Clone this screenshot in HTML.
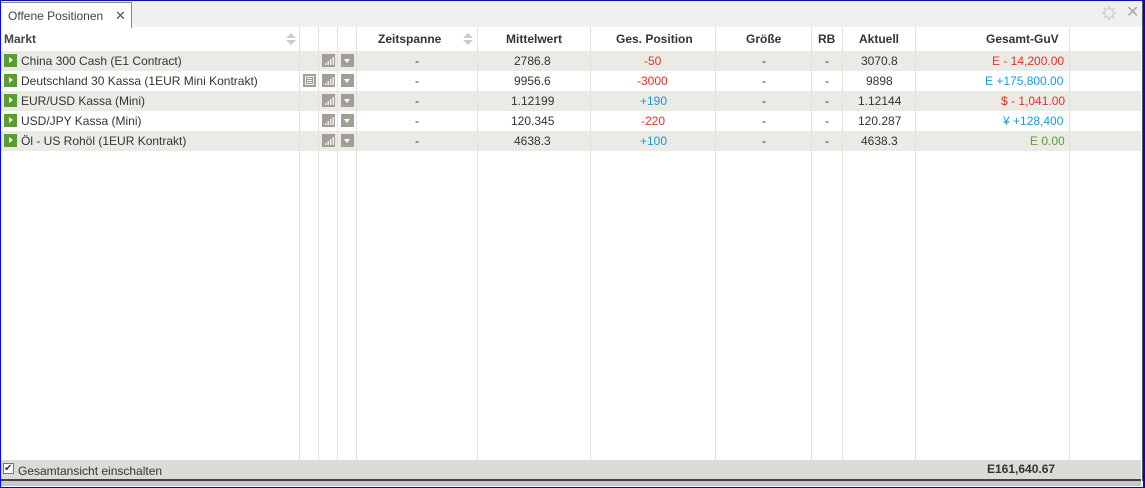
<!DOCTYPE html>
<html><head><meta charset="utf-8"><style>
*{box-sizing:border-box;margin:0;padding:0}
body{width:1145px;height:488px;background:#fff;font-family:"Liberation Sans",sans-serif;font-size:12px;color:#333;position:relative;overflow:hidden}
.frame{position:absolute;left:0;top:0;width:1145px;height:488px;border:1px solid #00f;border-right:2px solid #00f;}
.topbar{position:absolute;left:1px;top:1px;width:1141px;height:26px;background:#f0f0f0}
.tab{position:absolute;left:1px;top:2px;width:131px;height:26px;background:#fff;border:1px solid #888;border-bottom:none;border-left:none;font-size:12px;color:#444;padding:6px 0 0 7px}
.tab span{position:absolute;left:114px;top:5px;color:#555;font-size:13px}
.rb{position:absolute;right:2px;top:1px;width:1px;height:480px;background:#555}
.vl{position:absolute;top:27px;height:433px;width:1px;background:#e2e2e2}
.row{position:absolute;left:1px;width:1140px;height:20px}
.g{background:#ebebe6}
.c{position:absolute;top:3px;white-space:nowrap}
.hd{position:absolute;top:32px;font-weight:bold;color:#333;white-space:nowrap}
.play{position:absolute;left:3px;top:3px;width:13px;height:13px;background:#5a9e32}
.play:after{content:"";position:absolute;left:5px;top:3px;border-left:4px solid #fff;border-top:3.5px solid transparent;border-bottom:3.5px solid transparent}
.ic{position:absolute;top:3px;width:13px;height:13px;background:#a39e96}
.ic svg{position:absolute;left:0;top:0}
.dd:after{content:"";position:absolute;left:3px;top:5px;border-top:4px solid #fff;border-left:3.5px solid transparent;border-right:3.5px solid transparent}
.red{color:#e5302a}.blue{color:#1a9ad6}.green{color:#5a9e32}
.footer{position:absolute;left:1px;top:460px;width:1140px;height:21px;background:#dcdcd6;border-bottom:2px solid #444}
.sh{position:absolute;left:1px;top:481px;width:1140px;height:5px;background:#c8c8c8}
</style></head><body>
<div class="topbar"></div>
<div class="tab">Offene Positionen<span>✕</span></div>
<svg style="position:absolute;left:1100px;top:4px" width="18" height="18" viewBox="0 0 18 18"><g stroke="#d4d4d4" stroke-width="2"><line x1="9" y1="2" x2="9" y2="16"/><line x1="2" y1="9" x2="16" y2="9"/><line x1="4" y1="4" x2="14" y2="14"/><line x1="14" y1="4" x2="4" y2="14"/></g><circle cx="9" cy="9" r="4.5" fill="#f0f0f0" stroke="#d4d4d4" stroke-width="1.5"/></svg>
<div style="position:absolute;left:1126px;top:2px;color:#aaa;font-size:16px">✕</div>

<div class="row g" style="top:51px"></div>
<div class="row" style="top:71px"></div>
<div class="row g" style="top:91px"></div>
<div class="row" style="top:111px"></div>
<div class="row g" style="top:131px"></div>

<div class="vl" style="left:299px"></div><div class="vl" style="left:318px"></div><div class="vl" style="left:337px"></div><div class="vl" style="left:356px"></div><div class="vl" style="left:477px"></div><div class="vl" style="left:590px"></div><div class="vl" style="left:715px"></div><div class="vl" style="left:811px"></div><div class="vl" style="left:842px"></div><div class="vl" style="left:915px"></div><div class="vl" style="left:1069px"></div>

<div class="hd" style="left:4px;color:#444">Markt</div>
<div style="position:absolute;left:286px;top:33px;border-bottom:5px solid #ccc;border-left:5px solid transparent;border-right:5px solid transparent"></div>
<div style="position:absolute;left:286px;top:40px;border-top:5px solid #ccc;border-left:5px solid transparent;border-right:5px solid transparent"></div>
<div class="hd" style="left:378px">Zeitspanne</div>
<div style="position:absolute;left:463px;top:33px;border-bottom:5px solid #ccc;border-left:5px solid transparent;border-right:5px solid transparent"></div>
<div style="position:absolute;left:463px;top:40px;border-top:5px solid #ccc;border-left:5px solid transparent;border-right:5px solid transparent"></div>
<div class="hd" style="left:506px">Mittelwert</div>
<div class="hd" style="left:616px">Ges. Position</div>
<div class="hd" style="left:746px">Größe</div>
<div class="hd" style="left:818px">RB</div>
<div class="hd" style="left:859px">Aktuell</div>
<div class="hd" style="left:986px">Gesamt-GuV</div>

<div style="position:absolute;top:51px;left:0;width:1140px">
<div class="row" style="top:0;position:absolute"><div class="play"></div><div class="c" style="left:20px">China 300 Cash (E1 Contract)</div><div class="ic" style="left:321px"><svg width="13" height="13"><g fill="#eee"><rect x="3" y="9" width="1.5" height="2"/><rect x="5.5" y="7" width="1.5" height="4"/><rect x="8" y="5" width="1.5" height="6"/><rect x="10.5" y="3" width="1.5" height="8"/></g></svg></div><div class="ic dd" style="left:340px"></div><div class="c" style="left:414px">-</div><div class="c" style="left:513px">2786.8</div><div class="c red" style="left:643px">-50</div><div class="c" style="left:761px">-</div><div class="c" style="left:824px">-</div><div class="c" style="left:860px">3070.8</div><div class="c red" style="left:991px">E - 14,200.00</div></div>
<div class="row" style="top:20px;position:absolute"><div class="play"></div><div class="c" style="left:20px">Deutschland 30 Kassa (1EUR Mini Kontrakt)</div><div class="ic" style="left:302px"><svg width="13" height="13"><rect x="2.5" y="2.5" width="8" height="8" fill="none" stroke="#eee"/><g fill="#eee"><rect x="4" y="4" width="5" height="1"/><rect x="4" y="6" width="5" height="1"/><rect x="4" y="8" width="5" height="1"/></g></svg></div><div class="ic" style="left:321px"><svg width="13" height="13"><g fill="#eee"><rect x="3" y="9" width="1.5" height="2"/><rect x="5.5" y="7" width="1.5" height="4"/><rect x="8" y="5" width="1.5" height="6"/><rect x="10.5" y="3" width="1.5" height="8"/></g></svg></div><div class="ic dd" style="left:340px"></div><div class="c" style="left:414px">-</div><div class="c" style="left:513px">9956.6</div><div class="c red" style="left:636px">-3000</div><div class="c" style="left:761px">-</div><div class="c" style="left:824px">-</div><div class="c" style="left:865px">9898</div><div class="c blue" style="left:984px">E +175,800.00</div></div>
<div class="row" style="top:40px;position:absolute"><div class="play"></div><div class="c" style="left:20px">EUR/USD Kassa (Mini)</div><div class="ic" style="left:321px"><svg width="13" height="13"><g fill="#eee"><rect x="3" y="9" width="1.5" height="2"/><rect x="5.5" y="7" width="1.5" height="4"/><rect x="8" y="5" width="1.5" height="6"/><rect x="10.5" y="3" width="1.5" height="8"/></g></svg></div><div class="ic dd" style="left:340px"></div><div class="c" style="left:414px">-</div><div class="c" style="left:510px">1.12199</div><div class="c blue" style="left:639px">+190</div><div class="c" style="left:761px">-</div><div class="c" style="left:824px">-</div><div class="c" style="left:857px">1.12144</div><div class="c red" style="left:1000px">$ - 1,041.00</div></div>
<div class="row" style="top:60px;position:absolute"><div class="play"></div><div class="c" style="left:20px">USD/JPY Kassa (Mini)</div><div class="ic" style="left:321px"><svg width="13" height="13"><g fill="#eee"><rect x="3" y="9" width="1.5" height="2"/><rect x="5.5" y="7" width="1.5" height="4"/><rect x="8" y="5" width="1.5" height="6"/><rect x="10.5" y="3" width="1.5" height="8"/></g></svg></div><div class="ic dd" style="left:340px"></div><div class="c" style="left:414px">-</div><div class="c" style="left:510px">120.345</div><div class="c red" style="left:640px">-220</div><div class="c" style="left:761px">-</div><div class="c" style="left:824px">-</div><div class="c" style="left:857px">120.287</div><div class="c blue" style="left:1002px">¥ +128,400</div></div>
<div class="row" style="top:80px;position:absolute"><div class="play"></div><div class="c" style="left:20px">Öl - US Rohöl (1EUR Kontrakt)</div><div class="ic" style="left:321px"><svg width="13" height="13"><g fill="#eee"><rect x="3" y="9" width="1.5" height="2"/><rect x="5.5" y="7" width="1.5" height="4"/><rect x="8" y="5" width="1.5" height="6"/><rect x="10.5" y="3" width="1.5" height="8"/></g></svg></div><div class="ic dd" style="left:340px"></div><div class="c" style="left:414px">-</div><div class="c" style="left:513px">4638.3</div><div class="c blue" style="left:639px">+100</div><div class="c" style="left:761px">-</div><div class="c" style="left:824px">-</div><div class="c" style="left:860px">4638.3</div><div class="c green" style="left:1029px">E 0.00</div></div>
</div>

<div class="footer"><div style="position:absolute;left:2px;top:3px;width:11px;height:11px;border:1px solid #777;background:#fff;font-size:10px;line-height:9px">✔</div><div style="position:absolute;left:17px;top:4px;color:#333">Gesamtansicht einschalten</div><div style="position:absolute;left:986px;top:2px;font-weight:bold;color:#333">E161,640.67</div></div>
<div class="sh"></div>
<div class="rb"></div>
<div class="frame"></div>
</body></html>
